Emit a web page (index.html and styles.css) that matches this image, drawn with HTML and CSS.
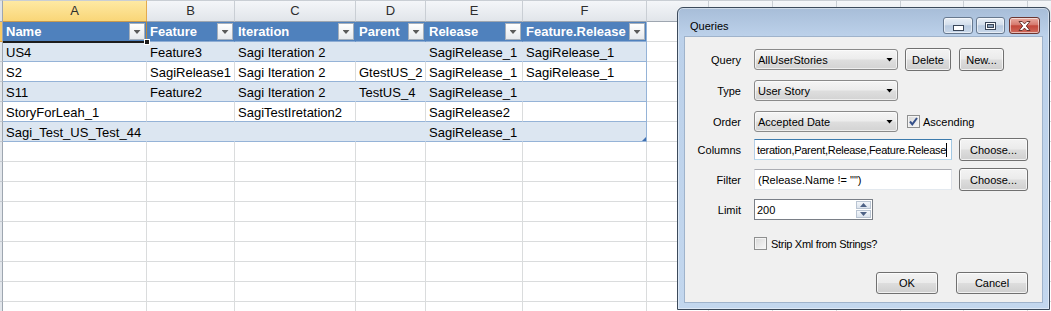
FILE: index.html
```html
<!DOCTYPE html>
<html>
<head>
<meta charset="utf-8">
<link rel="stylesheet" href="styles.css">
</head>
<body>
<div class="sheet">
  <div class="ch corner"></div><div class="ch sel">A</div><div class="ch">B</div><div class="ch">C</div><div class="ch">D</div><div class="ch">E</div><div class="ch">F</div><div class="ch"></div><div class="ch"></div><div class="ch"></div><div class="ch"></div><div class="ch"></div><div class="ch"></div><div class="ch"></div>

  <div class="rh sel"></div>
  <div class="c th active"><span>Name</span><i class="dd"></i></div>
  <div class="c th"><span>Feature</span><i class="dd"></i></div>
  <div class="c th"><span>Iteration</span><i class="dd"></i></div>
  <div class="c th"><span>Parent</span><i class="dd"></i></div>
  <div class="c th"><span>Release</span><i class="dd"></i></div>
  <div class="c th tl"><span>Feature.Release</span><i class="dd"></i></div>
  <div class="c"></div><div class="c"></div><div class="c"></div><div class="c"></div><div class="c"></div><div class="c"></div><div class="c"></div>

  <div class="rh"></div>
  <div class="c bd">US4</div><div class="c bd">Feature3</div><div class="c bd">Sagi Iteration 2</div><div class="c bd"></div><div class="c bd">SagiRelease_1</div><div class="c bd tl">SagiRelease_1</div>
  <div class="c"></div><div class="c"></div><div class="c"></div><div class="c"></div><div class="c"></div><div class="c"></div><div class="c"></div>

  <div class="rh"></div>
  <div class="c wt">S2</div><div class="c wt">SagiRelease1</div><div class="c wt">Sagi Iteration 2</div><div class="c wt">GtestUS_2</div><div class="c wt">SagiRelease_1</div><div class="c wt tl">SagiRelease_1</div>
  <div class="c"></div><div class="c"></div><div class="c"></div><div class="c"></div><div class="c"></div><div class="c"></div><div class="c"></div>

  <div class="rh"></div>
  <div class="c bd">S11</div><div class="c bd">Feature2</div><div class="c bd">Sagi Iteration 2</div><div class="c bd">TestUS_4</div><div class="c bd">SagiRelease_1</div><div class="c bd tl"></div>
  <div class="c"></div><div class="c"></div><div class="c"></div><div class="c"></div><div class="c"></div><div class="c"></div><div class="c"></div>

  <div class="rh"></div>
  <div class="c wt">StoryForLeah_1</div><div class="c wt"></div><div class="c wt">SagiTestIretation2</div><div class="c wt"></div><div class="c wt">SagiRelease2</div><div class="c wt tl"></div>
  <div class="c"></div><div class="c"></div><div class="c"></div><div class="c"></div><div class="c"></div><div class="c"></div><div class="c"></div>

  <div class="rh"></div>
  <div class="c bd">Sagi_Test_US_Test_44</div><div class="c bd"></div><div class="c bd"></div><div class="c bd"></div><div class="c bd">SagiRelease_1</div><div class="c bd tl corner-handle"></div>
  <div class="c"></div><div class="c"></div><div class="c"></div><div class="c"></div><div class="c"></div><div class="c"></div><div class="c"></div>

  <div class="rh"></div><div class="c"></div><div class="c"></div><div class="c"></div><div class="c"></div><div class="c"></div><div class="c"></div><div class="c"></div><div class="c"></div><div class="c"></div><div class="c"></div><div class="c"></div><div class="c"></div><div class="c"></div>
  <div class="rh"></div><div class="c"></div><div class="c"></div><div class="c"></div><div class="c"></div><div class="c"></div><div class="c"></div><div class="c"></div><div class="c"></div><div class="c"></div><div class="c"></div><div class="c"></div><div class="c"></div><div class="c"></div>
  <div class="rh"></div><div class="c"></div><div class="c"></div><div class="c"></div><div class="c"></div><div class="c"></div><div class="c"></div><div class="c"></div><div class="c"></div><div class="c"></div><div class="c"></div><div class="c"></div><div class="c"></div><div class="c"></div>
  <div class="rh"></div><div class="c"></div><div class="c"></div><div class="c"></div><div class="c"></div><div class="c"></div><div class="c"></div><div class="c"></div><div class="c"></div><div class="c"></div><div class="c"></div><div class="c"></div><div class="c"></div><div class="c"></div>
  <div class="rh"></div><div class="c"></div><div class="c"></div><div class="c"></div><div class="c"></div><div class="c"></div><div class="c"></div><div class="c"></div><div class="c"></div><div class="c"></div><div class="c"></div><div class="c"></div><div class="c"></div><div class="c"></div>
  <div class="rh"></div><div class="c"></div><div class="c"></div><div class="c"></div><div class="c"></div><div class="c"></div><div class="c"></div><div class="c"></div><div class="c"></div><div class="c"></div><div class="c"></div><div class="c"></div><div class="c"></div><div class="c"></div>
  <div class="rh"></div><div class="c"></div><div class="c"></div><div class="c"></div><div class="c"></div><div class="c"></div><div class="c"></div><div class="c"></div><div class="c"></div><div class="c"></div><div class="c"></div><div class="c"></div><div class="c"></div><div class="c"></div>
  <div class="rh"></div><div class="c"></div><div class="c"></div><div class="c"></div><div class="c"></div><div class="c"></div><div class="c"></div><div class="c"></div><div class="c"></div><div class="c"></div><div class="c"></div><div class="c"></div><div class="c"></div><div class="c"></div>
  <div class="rh"></div><div class="c"></div><div class="c"></div><div class="c"></div><div class="c"></div><div class="c"></div><div class="c"></div><div class="c"></div><div class="c"></div><div class="c"></div><div class="c"></div><div class="c"></div><div class="c"></div><div class="c"></div>
</div>

<div class="dlg">
  <div class="tbar">
    <div class="ttl">Queries</div>
    <div class="wbtns">
      <div class="wbtn wmin"><svg width="11" height="6" viewBox="0 0 11 6"><rect x="0.5" y="0.5" width="10" height="5" fill="#fff" stroke="#3a4658"/></svg></div>
      <div class="wbtn wmax"><svg width="11" height="8" viewBox="0 0 11 8"><rect x="0.5" y="0.5" width="10" height="7" fill="#fff" stroke="#3a4658"/><rect x="2.5" y="2.5" width="6" height="3" fill="#8fa3bb" stroke="#3a4658"/></svg></div>
      <div class="wbtn wclose"><svg width="13" height="10" viewBox="0 0 13 10"><path d="M1 0.5h3.2l2.3 2.4 2.3-2.4H12L8.3 5 12 9.5H8.8L6.5 7.1 4.2 9.5H1L4.7 5z" fill="#fff" stroke="#5b2a25" stroke-width="0.9"/></svg></div>
    </div>
  </div>
  <div class="client">
    <div class="row">
      <div class="lbl">Query</div>
      <div class="combo"><span>AllUserStories</span></div>
      <div class="btn b-del">Delete</div>
      <div class="btn b-new">New...</div>
    </div>
    <div class="row r-type">
      <div class="lbl">Type</div>
      <div class="combo"><span>User Story</span></div>
    </div>
    <div class="row r-order">
      <div class="lbl">Order</div>
      <div class="combo"><span>Accepted Date</span></div>
      <div class="chk chk-asc"><svg width="11" height="11" viewBox="0 0 11 11"><path d="M2 5.5l2.3 2.8L9 2" fill="none" stroke="#35508a" stroke-width="2"/></svg></div>
      <div class="chk-text">Ascending</div>
    </div>
    <div class="row r-cols">
      <div class="lbl">Columns</div>
      <div class="tb focus"><span class="tbtext tight">teration,Parent,Release,Feature.Release</span><span class="caret"></span></div>
      <div class="btn b-choose">Choose...</div>
    </div>
    <div class="row r-filter">
      <div class="lbl">Filter</div>
      <div class="tb"><span class="tbtext">(Release.Name != "")</span></div>
      <div class="btn b-choose">Choose...</div>
    </div>
    <div class="row r-limit">
      <div class="lbl">Limit</div>
      <div class="num"><span class="numtext">200</span>
        <div class="spin"><div class="sp up"></div><div class="sp down"></div></div>
      </div>
    </div>
    <div class="row r-strip">
      <div class="lbl"></div>
      <div class="chk"></div>
      <div class="chk-text strip">Strip Xml from Strings?</div>
    </div>
    <div class="row r-ok">
      <div class="btn b-ok">OK</div>
      <div class="btn b-cancel">Cancel</div>
    </div>
  </div>
</div>
</body>
</html>
```

FILE: styles.css
```css
html, body {
  margin: 0;
  padding: 0;
}
body {
  width: 1051px;
  height: 311px;
  overflow: hidden;
  position: relative;
  background: #ffffff;
  font-family: "Liberation Sans", Arial, sans-serif;
}

/* ---------- spreadsheet ---------- */
.sheet {
  display: grid;
  grid-template-columns: 3px 144px 88px 121px 70px 97px 124px 62px 64px 64px 64px 63px 64px 64px;
  grid-template-rows: 22px;
  grid-auto-rows: 20px;
  width: 1092px;
}
.sheet > div {
  box-sizing: border-box;
  min-width: 0;
}
.ch {
  background: linear-gradient(#f4f6f9, #e1e5ea);
  border-top: 1px solid #c9ced4;
  border-right: 1px solid #c9ced4;
  border-bottom: 1px solid #9ea6b0;
  text-align: center;
  font-size: 13px;
  line-height: 20px;
  color: #2d2d2d;
}
.ch.corner {
  background: #dfe3e8;
  border-right-color: #9ea6b0;
}
.ch.sel {
  background: linear-gradient(#fee9a3, #f9d678);
  border-right-color: #e3aa4e;
  border-bottom-color: #e29c34;
}
.rh {
  background: #e2e6eb;
  border-right: 1px solid #9ea6b0;
  border-bottom: 1px solid #c3c8cf;
}
.rh.sel {
  background: #f6c964;
  border-bottom-color: #e29c34;
}
.c {
  border-right: 1px solid #dadcdd;
  border-bottom: 1px solid #dadcdd;
  font-size: 13px;
  line-height: 19px;
  padding: 1px 3px 0 3px;
  white-space: nowrap;
  overflow: hidden;
  color: #000;
}
.th {
  background: #4f81bd;
  color: #ffffff;
  font-weight: bold;
  border-right-color: #4f81bd;
  border-bottom-color: #8eadd4;
  display: flex;
  align-items: center;
  justify-content: space-between;
  padding: 0 1px 0 3px;
  overflow: visible;
}
.dd {
  width: 16px;
  height: 17px;
  flex: none;
  box-sizing: border-box;
  border: 1px solid #a7b0bb;
  background: linear-gradient(#ffffff, #e6e9ed);
  display: flex;
  align-items: center;
  justify-content: center;
}
.dd::after {
  content: "";
  width: 7px;
  height: 4px;
  margin-top: 1px;
  background: #5a5a5a;
  clip-path: polygon(0 0, 100% 0, 50% 100%);
}
.active {
  position: relative;
}
.active::after {
  content: "";
  position: absolute;
  left: 0;
  top: -1px;
  right: -1px;
  bottom: -2px;
  border-top: 1px solid #c89a4e;
  border-right: 1px solid #b9893e;
  border-bottom: 2px solid #1c1c1c;
  pointer-events: none;
}
.active::before {
  content: "";
  position: absolute;
  right: -4px;
  bottom: -4px;
  width: 4px;
  height: 4px;
  background: #1c1c1c;
  border: 1px solid #ffffff;
  z-index: 2;
}
.bd {
  background: #dce6f1;
  border-right-color: #dce6f1;
  border-bottom-color: #95b3d7;
}
.wt {
  border-bottom-color: #95b3d7;
}
.tl {
  border-right-color: #95b3d7;
}
.corner-handle {
  position: relative;
}
.corner-handle::after {
  content: "";
  position: absolute;
  right: 0;
  bottom: 0;
  width: 4px;
  height: 4px;
  background: #3f6fb0;
  clip-path: polygon(100% 0, 100% 100%, 0 100%);
}

/* ---------- dialog ---------- */
.dlg {
  position: absolute;
  left: 677px;
  top: 7px;
  width: 373px;
  height: 303px;
  box-sizing: border-box;
  border: 1px solid #3c4a5b;
  border-radius: 6px 6px 0 0;
  background: linear-gradient(#a7bdd8, #bcd1ea 28px, #c3d7ee 100%);
  box-shadow: inset 0 0 0 1px rgba(255, 255, 255, 0.45);
  padding: 0 7px 7px 7px;
  display: flex;
  flex-direction: column;
  font-size: 11px;
  color: #000;
}
.tbar {
  height: 29px;
  display: flex;
  align-items: flex-start;
  flex: none;
}
.ttl {
  margin: 12px 0 0 5px;
  line-height: 13px;
  font-size: 11px;
}
.wbtns {
  margin: 9px 2px 0 auto;
  display: flex;
  gap: 3px;
}
.wbtn {
  height: 17px;
  box-sizing: border-box;
  border: 1px solid #67798f;
  border-radius: 3px;
  background: linear-gradient(#e9eff6, #d4dfec 45%, #b8cae0 52%, #c9d8ea);
  box-shadow: inset 0 0 0 1px rgba(255, 255, 255, 0.55);
  display: flex;
  align-items: center;
  justify-content: center;
}
.wmin { width: 30px; }
.wmin svg { margin-top: 4px; }
.wmax { width: 29px; }
.wclose {
  width: 31px;
  margin-left: 1px;
  border-color: #6b3530;
  background: linear-gradient(#e9aca2, #d67a6e 45%, #c3473a 52%, #cf6a5c);
}
.client {
  flex: 1;
  background: #f0f0f0;
  box-shadow: 0 0 0 1px #9fb3cb;
  padding-top: 12px;
  display: flex;
  flex-direction: column;
}
.row {
  display: flex;
  align-items: center;
  height: 21px;
  flex: none;
}
.lbl {
  width: 56px;
  margin-right: 13px;
  text-align: right;
  flex: none;
}
.r-type { margin-top: 10px; }
.r-order { margin-top: 10px; }
.r-cols { margin-top: 7px; }
.r-filter { margin-top: 9px; }
.r-limit { margin-top: 9px; }
.r-strip { margin-top: 13px; }
.r-ok {
  margin-top: 18px;
  justify-content: flex-end;
  padding-right: 14px;
}
.combo {
  width: 144px;
  height: 21px;
  flex: none;
  box-sizing: border-box;
  border: 1px solid #8a8a8a;
  border-radius: 3px;
  background: linear-gradient(#f5f5f5, #ececec 48%, #dedede 52%, #d3d3d3);
  box-shadow: inset 0 0 0 1px rgba(255, 255, 255, 0.6);
  display: flex;
  align-items: center;
  justify-content: space-between;
  padding: 0 4px 0 3px;
}
.combo::after {
  content: "";
  width: 7px;
  height: 4px;
  background: #000;
  clip-path: polygon(0 0, 100% 0, 50% 100%);
}
.btn {
  height: 23px;
  flex: none;
  box-sizing: border-box;
  border: 1px solid #707070;
  border-radius: 3px;
  background: linear-gradient(#f3f3f3, #ebebeb 48%, #dddddd 52%, #cfcfcf);
  box-shadow: inset 0 0 0 1px rgba(255, 255, 255, 0.7);
  display: flex;
  align-items: center;
  justify-content: center;
}
.b-del { width: 46px; margin-left: 7px; }
.b-new { width: 45px; margin-left: 8px; }
.b-choose { width: 69px; margin-left: 7px; }
.b-ok { width: 62px; height: 22px; }
.b-cancel { width: 72px; height: 22px; margin-left: 18px; }
.chk {
  width: 13px;
  height: 13px;
  flex: none;
  box-sizing: border-box;
  border: 1px solid #8e8f8f;
  background: linear-gradient(135deg, #d8d8d8, #f8f8f8);
  box-shadow: inset 0 0 0 1px #f4f4f4;
  display: flex;
  align-items: center;
  justify-content: center;
}
.chk-asc { margin-left: 9px; }
.chk-text { margin-left: 3px; }
.chk-text.strip {
  margin-left: 4px;
  letter-spacing: -0.3px;
}
.tb {
  width: 198px;
  height: 21px;
  flex: none;
  box-sizing: border-box;
  border: 1px solid;
  border-color: #abadb3 #dbdfe6 #e3e9ef #e2e3ea;
  background: #ffffff;
  padding: 0 2px 0 3px;
  display: flex;
  align-items: center;
  overflow: hidden;
  white-space: nowrap;
}
.tb.focus {
  border-color: #3d7bad #a4c9e3 #b7d9ed #b5cfe7;
  padding: 0 1px 0 2px;
}
.tbtext {
  flex: none;
}
.tbtext.tight {
  letter-spacing: -0.28px;
}
.caret {
  width: 1px;
  height: 14px;
  background: #000;
  flex: none;
}
.num {
  width: 119px;
  height: 21px;
  flex: none;
  box-sizing: border-box;
  border: 1px solid #7a7f87;
  background: #ffffff;
  display: flex;
  align-items: stretch;
  padding: 1px;
}
.numtext {
  align-self: center;
  margin-left: 1px;
}
.spin {
  margin-left: auto;
  width: 15px;
  display: flex;
  flex-direction: column;
  gap: 1px;
}
.sp {
  flex: 1;
  box-sizing: border-box;
  border: 1px solid #b9c4d2;
  background: linear-gradient(#f3f6fa, #dbe3ed);
  display: flex;
  align-items: center;
  justify-content: center;
}
.sp::after {
  content: "";
  width: 7px;
  height: 4px;
  background: #4d6185;
}
.sp.up::after {
  clip-path: polygon(50% 0, 100% 100%, 0 100%);
}
.sp.down::after {
  clip-path: polygon(0 0, 100% 0, 50% 100%);
}
```
